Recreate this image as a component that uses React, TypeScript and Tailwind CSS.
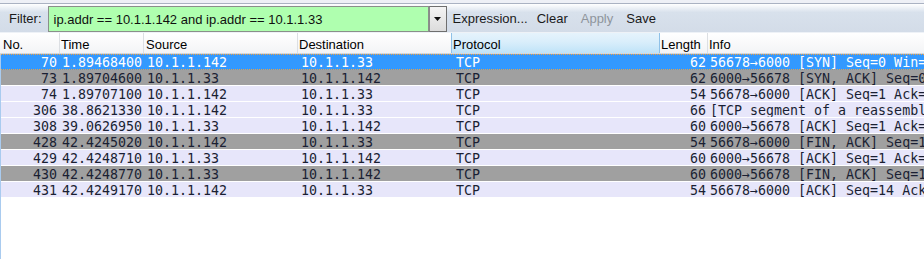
import React from "react";

type Row = {
  no: string;
  time: string;
  src: string;
  dst: string;
  proto: string;
  len: string;
  info: string;
  kind: "sel" | "gray" | "norm";
};

const rows: Row[] = [
  { no: "70", time: "1.89468400", src: "10.1.1.142", dst: "10.1.1.33", proto: "TCP", len: "62", info: "56678\u21926000 [SYN] Seq=0 Win=8192 Len=0 MSS=1460 WS=4 SACK_PERM=1", kind: "sel" },
  { no: "73", time: "1.89704600", src: "10.1.1.33", dst: "10.1.1.142", proto: "TCP", len: "62", info: "6000\u219256678 [SYN, ACK] Seq=0 Ack=1 Win=8192 Len=0", kind: "gray" },
  { no: "74", time: "1.89707100", src: "10.1.1.142", dst: "10.1.1.33", proto: "TCP", len: "54", info: "56678\u21926000 [ACK] Seq=1 Ack=1 Win=65700 Len=0", kind: "norm" },
  { no: "306", time: "38.8621330", src: "10.1.1.142", dst: "10.1.1.33", proto: "TCP", len: "66", info: "[TCP segment of a reassembled PDU]", kind: "norm" },
  { no: "308", time: "39.0626950", src: "10.1.1.33", dst: "10.1.1.142", proto: "TCP", len: "60", info: "6000\u219256678 [ACK] Seq=1 Ack=13 Win=65700 Len=0", kind: "norm" },
  { no: "428", time: "42.4245020", src: "10.1.1.142", dst: "10.1.1.33", proto: "TCP", len: "54", info: "56678\u21926000 [FIN, ACK] Seq=13 Ack=1 Win=65700 Len=0", kind: "gray" },
  { no: "429", time: "42.4248710", src: "10.1.1.33", dst: "10.1.1.142", proto: "TCP", len: "60", info: "6000\u219256678 [ACK] Seq=1 Ack=14 Win=65700 Len=0", kind: "norm" },
  { no: "430", time: "42.4248770", src: "10.1.1.33", dst: "10.1.1.142", proto: "TCP", len: "60", info: "6000\u219256678 [FIN, ACK] Seq=1 Ack=14 Win=65700 Len=0", kind: "gray" },
  { no: "431", time: "42.4249170", src: "10.1.1.142", dst: "10.1.1.33", proto: "TCP", len: "54", info: "56678\u21926000 [ACK] Seq=14 Ack=2 Win=65700 Len=0", kind: "norm" },
];

const grid = "grid grid-cols-[60px_84px_154px_154px_208px_48px_1fr]";

export default function App() {
  return (
    <div
      className="w-[924px] h-[259px] bg-white overflow-hidden flex flex-col"
      style={{ fontFamily: '"Liberation Sans", Arial, sans-serif' }}
    >
      {/* top strip */}
      <div className="h-[4px] bg-[#eef0f6] border-b border-[#aab2c2] shrink-0" />
      {/* toolbar */}
      <div className="h-[29px] shrink-0 flex items-center bg-gradient-to-b from-[#ffffff] via-[#d8e1ec] via-30% to-[#d3dce8] border-b border-[#eef2f7] text-[13px] leading-[16px] text-[#1a1a1a]">
        <span className="pl-[9px] pr-[6px] pt-[2px]">Filter:</span>
        <div className="flex h-[26px] items-stretch mt-[1px]">
          <div className="w-[381px] bg-[#afffaf] border border-[#8a8f8a] flex items-center pl-[5px] pt-[2px] text-[13px] text-[#101010]">
            ip.addr == 10.1.1.142 and ip.addr == 10.1.1.33
          </div>
          <div className="w-[18px] border border-[#6f6f6f] border-l-[#8a8a8a] bg-gradient-to-b from-[#f4f4f4] to-[#dcdcdc] flex items-center justify-center">
            <svg width="7" height="4" viewBox="0 0 7 4">
              <path d="M0 0 H7 L3.5 4 Z" fill="#111" />
            </svg>
          </div>
        </div>
        <span className="ml-[6px] pt-[2px]">Expression...</span>
        <span className="ml-[9px] pt-[2px]">Clear</span>
        <span className="ml-[13px] pt-[2px] text-[#8f959c]">Apply</span>
        <span className="ml-[13px] pt-[2px]">Save</span>
      </div>
      {/* header */}
      <div className={`${grid} h-[21px] shrink-0 bg-gradient-to-b from-white to-[#f3f4f6] border-b border-[#d5d7db] text-[13px] leading-[16px] text-black`}>
        <div className="pl-[3px] pt-[4px] border-r border-[#dcdfe3]">No.</div>
        <div className="pl-[1px] pt-[4px] border-r border-[#dcdfe3]">Time</div>
        <div className="pl-[2px] pt-[4px] border-r border-[#dcdfe3]">Source</div>
        <div className="pl-[1px] pt-[4px] border-r border-[#8fc1e8]">Destination</div>
        <div className="pl-[1px] pt-[4px] bg-gradient-to-b from-[#e6f3fc] via-[#d9eefb] via-45% to-[#bfe3f8] border-r border-[#8fc1e8]">Protocol</div>
        <div className="pl-[1px] pt-[4px] border-r border-[#dcdfe3]">Length</div>
        <div className="pl-[1px] pt-[4px]">Info</div>
      </div>
      {/* rows */}
      <div
        className="flex-1 border-l border-[#a9cbef] text-[13.3px] leading-[14px]"
        style={{ fontFamily: '"DejaVu Sans Mono", "Liberation Mono", monospace' }}
      >
        {rows.map((r) => {
          const cls =
            r.kind === "sel"
              ? "bg-[#3399ff] text-white border-y border-dotted border-[#f0a040] h-[16px] pt-[1px]"
              : r.kind === "gray"
              ? "bg-[#a0a0a0] text-[#1a1f33] border-b border-white h-[16px] pt-[2px]"
              : "bg-[#e7e6fa] text-[#1a1f33] border-b border-white h-[16px] pt-[2px]";
          return (
            <div key={r.no} className={`${grid} ${cls} whitespace-nowrap overflow-hidden`}>
              <div className="text-right pr-[4px]">{r.no}</div>
              <div className="pl-[1px] overflow-hidden">{r.time}</div>
              <div className="pl-[2px]">{r.src}</div>
              <div className="pl-[2px]">{r.dst}</div>
              <div className="pl-[3px]">{r.proto}</div>
              <div className="text-right pr-[3px]">{r.len}</div>
              <div className="pl-[1px] overflow-hidden">{r.info}</div>
            </div>
          );
        })}
      </div>
    </div>
  );
}
